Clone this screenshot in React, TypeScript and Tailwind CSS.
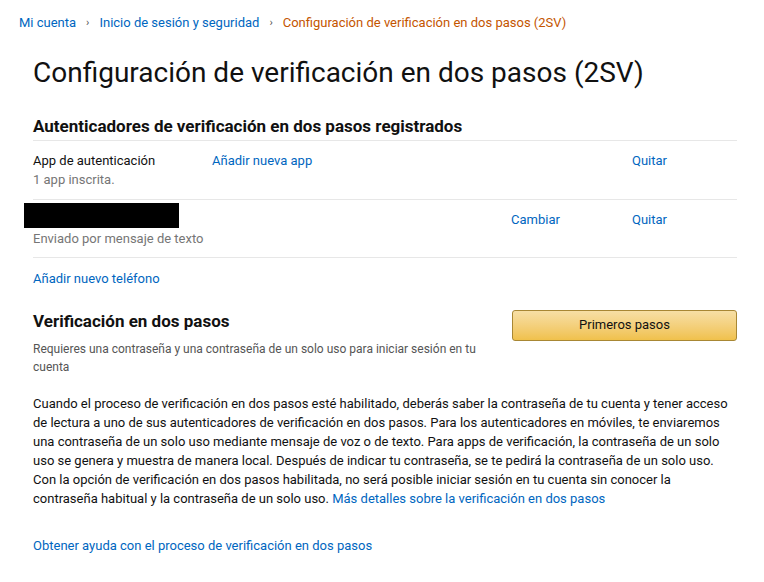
export default function App() {
  const font = { fontFamily: 'Roboto, "Liberation Sans", sans-serif' }
  return (
    <div className="min-h-screen bg-white text-[#111] text-[13px]" style={font}>
      <nav className="flex items-center gap-[10px] px-[19px] pt-[13px] text-[13px]">
        <a className="text-[#0066c0]">Mi cuenta</a>
        <span className="text-[#555] text-[11px]">›</span>
        <a className="text-[#0066c0]">Inicio de sesión y seguridad</a>
        <span className="text-[#555] text-[11px]">›</span>
        <span className="text-[#c45500]">Configuración de verificación en dos pasos (2SV)</span>
      </nav>

      <div className="pl-[33px] pr-[27px]">
        <h1 className="mt-[22px] text-[28px] leading-[36px] font-normal">
          Configuración de verificación en dos pasos (2SV)
        </h1>

        <h2 className="mt-[23px] text-[17px] leading-[24px] font-bold">
          Autenticadores de verificación en dos pasos registrados
        </h2>
        <div className="mt-[2px] border-t border-[#e7e7e7]" />

        <div className="flex pt-[10px] pb-[9px] border-b border-[#e7e7e7]">
          <div className="w-[179px]">
            <div className="leading-[19px]">App de autenticación</div>
            <div className="leading-[20px] text-[#767676]">1 app inscrita.</div>
          </div>
          <a className="text-[#0066c0] leading-[19px]">Añadir nueva app</a>
          <div className="flex-1" />
          <a className="text-[#0066c0] leading-[19px] w-[105px]">Quitar</a>
        </div>

        <div className="flex items-start pt-[3px] pb-[8px] border-b border-[#e7e7e7]">
          <div className="flex-1">
            <div className="-ml-[9px] w-[155px] h-[25px] bg-black" />
            <div className="mt-[1px] leading-[20px] text-[#767676]">Enviado por mensaje de texto</div>
          </div>
          <a className="mt-[7px] text-[#0066c0] leading-[19px] w-[121px]">Cambiar</a>
          <a className="mt-[7px] text-[#0066c0] leading-[19px] w-[105px]">Quitar</a>
        </div>

        <a className="block mt-[11px] text-[#0066c0] leading-[19px]">Añadir nuevo teléfono</a>

        <div className="flex mt-[22px]">
          <div className="w-[460px]">
            <h2 className="text-[17px] leading-[22px] font-bold">Verificación en dos pasos</h2>
            <p className="mt-[8px] text-[12px] leading-[18px] text-[#555]">
              Requieres una contraseña y una contraseña de un solo uso para iniciar sesión en tu cuenta
            </p>
          </div>
          <div className="flex-1" />
          <button className="w-[225px] h-[31px] rounded-[3px] border border-[#a88734] bg-gradient-to-b from-[#f7dfa5] to-[#f0c14b] text-[13px] text-[#111]">
            Primeros pasos
          </button>
        </div>

        <p className="mt-[18px] leading-[19px]">
          Cuando el proceso de verificación en dos pasos esté habilitado, deberás saber la contraseña de tu cuenta y tener acceso de lectura a uno de sus autenticadores de verificación en dos pasos. Para los autenticadores en móviles, te enviaremos una contraseña de un solo uso mediante mensaje de voz o de texto. Para apps de verificación, la contraseña de un solo uso se genera y muestra de manera local. Después de indicar tu contraseña, se te pedirá la contraseña de un solo uso. Con la opción de verificación en dos pasos habilitada, no será posible iniciar sesión en tu cuenta sin conocer la contraseña habitual y la contraseña de un solo uso.{' '}
          <a className="text-[#0066c0]">Más detalles sobre la verificación en dos pasos</a>
        </p>

        <a className="block mt-[28px] text-[#0066c0] leading-[19px]">
          Obtener ayuda con el proceso de verificación en dos pasos
        </a>
      </div>
    </div>
  )
}
